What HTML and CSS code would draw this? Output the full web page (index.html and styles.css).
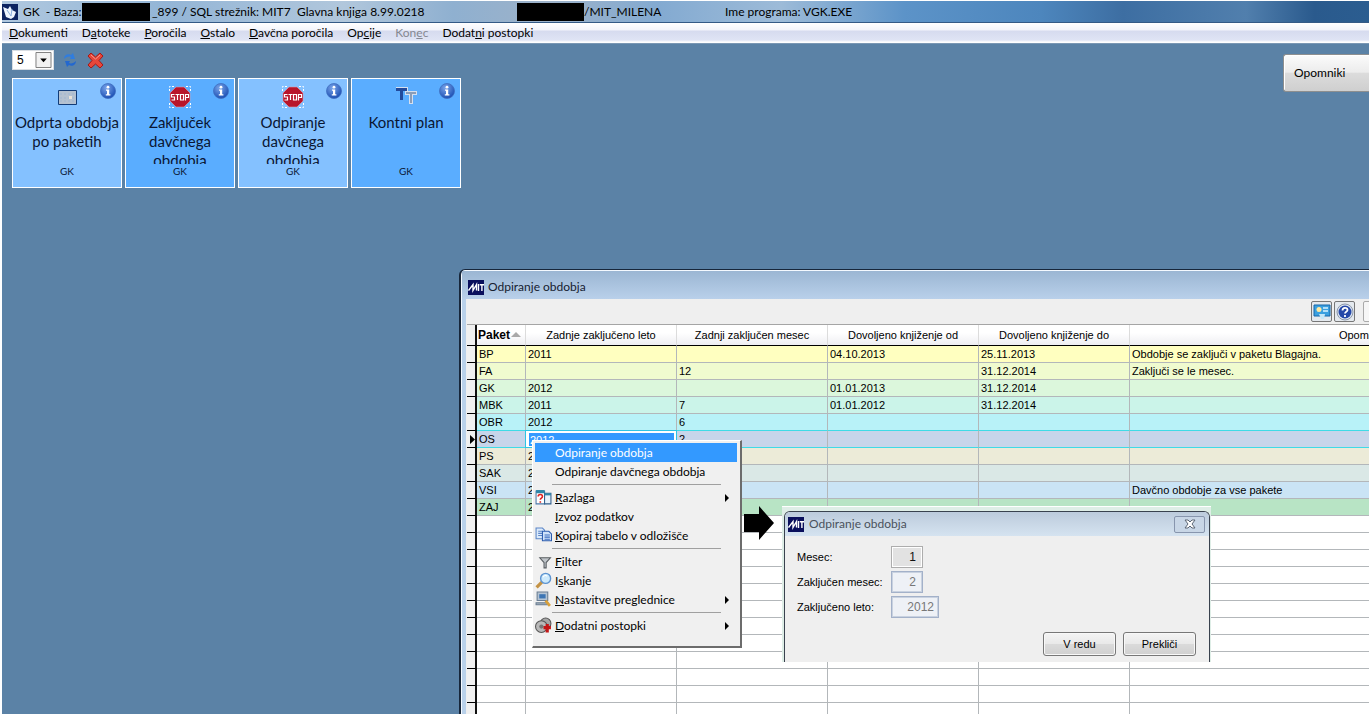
FILE: index.html
```html
<!DOCTYPE html>
<html lang="sl">
<head>
<meta charset="utf-8">
<title>GK - Glavna knjiga</title>
<link rel="stylesheet" href="styles.css">
</head>
<body>
<svg class="defs" aria-hidden="true">
  <defs>
    <radialGradient id="blueBall" cx="40%" cy="30%" r="70%"><stop offset="0" stop-color="#7aa5ea"/><stop offset="1" stop-color="#1c50b4"/></radialGradient>
    <symbol id="info" viewBox="0 0 16 16">
      <circle cx="8" cy="8" r="7.5" fill="url(#blueBall)" stroke="#3f6fc0" stroke-width=".8"/>
      <circle cx="8" cy="4.2" r="1.4" fill="#fff"/><path d="M6 6.6h3.2v4.6h1.2v1.2H5.8v-1.2H7V7.8H6z" fill="#fff"/>
    </symbol>
    <symbol id="stop" viewBox="0 0 22 22">
      <path d="M.5 5V.5H5M17 .5h4.500V5M21.500 17v4.500H17M5 21.500H.5V17" fill="none" stroke="#fff" stroke-dasharray="2 1.500"/>
      <path d="M7 1h8l6 6v8l-6 6H7l-6-6V7z" fill="#b8152b" stroke="#d8a0b0" stroke-width=".6"/>
      <path d="M5.500 8.500H2.500v2.500h3v3h-3M6.500 8.500h4M8.500 8.500V14M11.500 8.500h3V14h-3zM16.500 14.500v-6h3v3h-3" fill="none" stroke="#fff" stroke-width="1.200"/>
    </symbol>
    <symbol id="mit" viewBox="0 0 16 15">
      <path d="M0 0h16v15H0z" fill="#0a0f5c"/>
      <path d="M.5 10.500 5 4.500v6L8.500 4.500v6M10.500 4v7M11.800 4.700H16M13.900 4.700V11" fill="none" stroke="#fff" stroke-width="1.400"/>
    </symbol>
  </defs>
</svg>
<div class="app">
  <header class="titlebar">
    <svg class="app-icon" viewBox="0 0 16 16"><path d="M0 0h16v16H0z" fill="#0d2461"/><path d="m1 3 5 2 2-3 2 4 4 2-2 5-3 2-5-2z" fill="#eef5ff"/><path d="m5 6 4 6M10 5l-1 7" stroke="#8db1dd" fill="none"/></svg>
    <span class="title-text">GK &nbsp;- Baza:</span>
    <span class="redacted"></span>
    <span class="title-text after">_899 / SQL strežnik: MIT7</span>
    <span class="title-text">Glavna knjiga 8.99.0218</span>
    <span class="redacted"></span>
    <span class="title-text">/MIT_MILENA</span>
    <span class="title-text">Ime programa: VGK.EXE</span>
  </header>
  <nav class="menubar">
    <button class="menu"><u>D</u>okumenti</button>
    <button class="menu">D<u>a</u>toteke</button>
    <button class="menu"><u>P</u>oročila</button>
    <button class="menu"><u>O</u>stalo</button>
    <button class="menu"><u>D</u>avčna poročila</button>
    <button class="menu">Op<u>c</u>ije</button>
    <button class="menu" disabled>Kon<u>e</u>c</button>
    <button class="menu">Dodat<u>n</u>i postopki</button>
  </nav>
  <main class="desktop">
    <div class="desk-top">
      <div class="desk-left">
        <div class="tools">
          <span class="combo"><select aria-label="Število"><option>5</option></select><svg class="combo-arrow" viewBox="0 0 17 17"><path d="M.5.5h16v16H.5z" fill="#f2f2f2" stroke="#777"/><path d="M5 7h7l-3.500 4z" fill="#000"/></svg></span>
          <button class="tool" aria-label="Osveži"><svg width="14" height="16" viewBox="0 0 14 16"><path d="M1 7c0-4 4-6 7-4l2-2 2 6H7l1-2C6 4 3 5 1 7z" fill="#2f7de0"/><path d="M13 9c0 4-4 6-7 4l-2 2-2-6h5l-1 2c2 1 5 0 7-2z" fill="#2368cf"/></svg></button>
          <button class="tool" aria-label="Zapri"><svg width="17" height="17" viewBox="0 0 17 17"><path d="M4 1 8.500 5 13 1l3 3-4 4.500L16 13l-3 3-4.500-4L4 16l-3-3 4-4.500L1 4z" fill="#e8473a" stroke="#a81815" stroke-linejoin="round"/><path d="m4 3 4.500 4L13 3" stroke="#f79a8c" fill="none"/></svg></button>
        </div>
        <div class="tiles">
          <a class="tile" href="#"><svg class="info"><use href="#info"/></svg><svg class="tile-icon" viewBox="0 0 22 22"><path d="M2.500 4.500h18v14h-18z" fill="#b4c1d0" stroke="#123c78"/><path d="M4 8h15M4 12h15M4 15h15" stroke="#9fb6d1" stroke-dasharray="2 2"/><path d="M13 10h3v3h-3z" fill="#e8e2d8"/></svg><span class="tile-name">Odprta obdobja po paketih</span><span class="tile-group">GK</span></a>
          <a class="tile alt" href="#"><svg class="info"><use href="#info"/></svg><svg class="tile-icon"><use href="#stop"/></svg><span class="tile-name">Zaključek davčnega obdobja</span><span class="tile-group">GK</span></a>
          <a class="tile" href="#"><svg class="info"><use href="#info"/></svg><svg class="tile-icon"><use href="#stop"/></svg><span class="tile-name">Odpiranje davčnega obdobja</span><span class="tile-group">GK</span></a>
          <a class="tile alt" href="#"><svg class="info"><use href="#info"/></svg><svg class="tile-icon" viewBox="0 0 22 22"><path d="M1 1h12v4H1zM10 5h12v4H10zM14 8h4v10h-4z" fill="#d4dfef"/><path d="M1 2h11v3H8v9H5V5H1z" fill="#214a9c"/><path d="M11 6h10v2h-4v9h-2V8h-4z" fill="#8a9db8"/></svg><span class="tile-name">Kontni plan</span><span class="tile-group">GK</span></a>
        </div>
      </div>
      <button class="reminders">Opomniki</button>
    </div>

    <section class="window">
      <div class="window-title"><svg class="mit"><use href="#mit"/></svg><span>Odpiranje obdobja</span></div>
      <div class="window-body">
        <div class="window-tools">
          <button class="square" aria-label="Prikaz"><svg width="18" height="18" viewBox="0 0 18 18"><path d="M1 2h16v11H1z" fill="#3aa0e0" stroke="#1767a8"/><circle cx="6" cy="6.500" r="2.500" fill="#ffe9a0"/><path d="M10 5h5M10 8h5" stroke="#d9f3ff" stroke-width="1.500"/><path d="M6 11h6l-1 5H8z" fill="#c4e7f8"/></svg></button>
          <button class="square" aria-label="Pomoč"><svg width="18" height="18" viewBox="0 0 18 18"><circle cx="9" cy="9" r="8" fill="#dfe7f2" stroke="#8a96a8"/><circle cx="9" cy="9" r="6.500" fill="#2548a8"/><path d="M6.500 7.500c0-3.500 5-3.500 5-.5 0 1.800-2.500 1.600-2.500 3.500M9 12v2" fill="none" stroke="#fff" stroke-width="1.800"/></svg></button>
          <button class="square last" aria-label="Izhod"><svg width="18" height="18" viewBox="0 0 18 18"><path d="M4 4h12v11H4z" fill="#b8bcc2"/></svg></button>
        </div>
        <table class="grid">
          <colgroup><col class="c-mark"><col class="c-id"><col class="c-mid"><col class="c-mid"><col class="c-mid"><col class="c-mid"><col></colgroup>
          <thead><tr><th></th><th class="sorted"><span>Paket</span><svg width="10" height="5" viewBox="0 0 10 5"><path d="M0 5h10L5 0z" fill="#a9a9a9"/></svg></th><th>Zadnje zaključeno leto</th><th>Zadnji zaključen mesec</th><th>Dovoljeno knjiženje od</th><th>Dovoljeno knjiženje do</th><th>Opombe</th></tr></thead>
          <tbody>
            <tr class="r1"><td></td><td>BP</td><td>2011</td><td></td><td>04.10.2013</td><td>25.11.2013</td><td>Obdobje se zaključi v paketu Blagajna.</td></tr>
            <tr class="r2"><td></td><td>FA</td><td></td><td>12</td><td></td><td>31.12.2014</td><td>Zaključi se le mesec.</td></tr>
            <tr class="r3"><td></td><td>GK</td><td>2012</td><td></td><td>01.01.2013</td><td>31.12.2014</td><td></td></tr>
            <tr class="r4"><td></td><td>MBK</td><td>2011</td><td>7</td><td>01.01.2012</td><td>31.12.2014</td><td></td></tr>
            <tr class="r5"><td></td><td>OBR</td><td>2012</td><td>6</td><td></td><td></td><td></td></tr>
            <tr class="r6"><td class="marker"><svg width="5" height="9" viewBox="0 0 5 9"><path d="M0 0v9l5-4.500z"/></svg></td><td>OS</td><td class="editing"><input value="2012" aria-label="Zadnje zaključeno leto"></td><td>2</td><td></td><td></td><td></td></tr>
            <tr class="r7"><td></td><td>PS</td><td>2012</td><td></td><td></td><td></td><td></td></tr>
            <tr class="r8"><td></td><td>SAK</td><td>2012</td><td></td><td></td><td></td><td></td></tr>
            <tr class="r9"><td></td><td>VSI</td><td>2012</td><td></td><td></td><td></td><td>Davčno obdobje za vse pakete</td></tr>
            <tr class="r10"><td></td><td>ZAJ</td><td>2012</td><td></td><td></td><td></td><td></td></tr>
            <tr><td></td><td></td><td></td><td></td><td></td><td></td><td></td></tr>
            <tr><td></td><td></td><td></td><td></td><td></td><td></td><td></td></tr>
            <tr><td></td><td></td><td></td><td></td><td></td><td></td><td></td></tr>
            <tr><td></td><td></td><td></td><td></td><td></td><td></td><td></td></tr>
            <tr><td></td><td></td><td></td><td></td><td></td><td></td><td></td></tr>
            <tr><td></td><td></td><td></td><td></td><td></td><td></td><td></td></tr>
            <tr><td></td><td></td><td></td><td></td><td></td><td></td><td></td></tr>
            <tr><td></td><td></td><td></td><td></td><td></td><td></td><td></td></tr>
            <tr><td></td><td></td><td></td><td></td><td></td><td></td><td></td></tr>
            <tr><td></td><td></td><td></td><td></td><td></td><td></td><td></td></tr>
            <tr><td></td><td></td><td></td><td></td><td></td><td></td><td></td></tr>
            <tr><td></td><td></td><td></td><td></td><td></td><td></td><td></td></tr>
          </tbody>
        </table>
      </div>
    </section>

    <div class="context">
      <button class="item active"><span></span><span>Odpiranje obdobja</span></button>
      <button class="item"><span></span><span>Odpiranje davčnega obdobja</span></button>
      <hr>
      <button class="item"><svg viewBox="0 0 16 16"><path d="M1 2h8v12H1z" fill="#fff" stroke="#4a78a8"/><path d="M1 1h8v3H1z" fill="#2e86a8"/><path d="M9 4h6v10H9z" fill="#e8f2fa" stroke="#315f8c"/><path d="M9 4h6v2H9z" fill="#2e86a8"/><path d="M3 7c0-2.500 4-2.500 4 0 0 1.500-2 1.500-2 3M5 11.500v1.500" fill="none" stroke="#d22" stroke-width="1.500"/></svg><span><u>R</u>azlaga</span><i></i></button>
      <button class="item"><span></span><span><u>I</u>zvoz podatkov</span></button>
      <button class="item"><svg viewBox="0 0 16 16"><path d="M1 1h6l2 2v8H1z" fill="#dcebfb" stroke="#5c86c8"/><path d="M3 4h4M3 6h4M3 8h4" stroke="#5c86c8"/><path d="M7 4h6l2.500 2.500V13H7z" fill="#cfe2fa" stroke="#2c5cae"/><path d="M9 7.500h5M9 9.500h5M9 11.500h5" stroke="#3c6cbe"/></svg><span><u>K</u>opiraj tabelo v odložišče</span></button>
      <hr>
      <button class="item"><svg viewBox="0 0 16 16"><path d="M4.500 4.500h10l-4 4.500v5H8.500V9z" fill="#bfc4c9" stroke="#585d62"/></svg><span><u>F</u>ilter</span></button>
      <button class="item"><svg viewBox="0 0 16 16"><path d="m1.500 14.500 5-5" stroke="#c49345" stroke-width="3"/><circle cx="10" cy="6" r="4.700" fill="#cdeafc" stroke="#5c93d0" stroke-width="1.300"/><path d="M7.500 5c1-2 3-2 4-1" fill="none" stroke="#fff"/></svg><span>I<u>s</u>kanje</span></button>
      <button class="item"><svg viewBox="0 0 16 16"><path d="M2 1h10v8H2z" fill="#b5c4d4" stroke="#6a7d92"/><path d="M4 3h6v4H4z" fill="#3d75b4"/><path d="M1 11h11l1 2H1z" fill="#a4afba" stroke="#6a7d92"/><path d="m10 9 4 5" stroke="#d8a03a" stroke-width="2.500"/></svg><span><u>N</u>astavitve preglednice</span><i></i></button>
      <hr>
      <button class="item"><svg viewBox="0 0 16 16"><circle cx="10" cy="6" r="5" fill="#a6a6a6" stroke="#555"/><circle cx="6" cy="9" r="5.500" fill="#b9b9b9" stroke="#555"/><circle cx="6" cy="9" r="2" fill="#777"/><path d="M8 10h7M11.500 6.500v8" stroke="#c31616" stroke-width="3"/></svg><span><u>D</u>odatni postopki</span><i></i></button>
    </div>

    <svg class="pointer" viewBox="0 0 30 34"><path d="M0 8h15V0l15 17-15 17v-8H0z"/></svg>

    <form class="dialog-shot">
      <div class="dialog">
        <div class="dialog-title"><svg class="mit"><use href="#mit"/></svg><span>Odpiranje obdobja</span><button type="button" class="close" aria-label="Zapri"><svg width="12" height="10" viewBox="0 0 12 10"><path d="M1 1h3l2 2 2-2h3L8 5l3 4H8L6 7 4 9H1l3-4z" fill="#fff" stroke="#5c6674"/></svg></button></div>
        <div class="fields">
          <label for="m">Mesec:</label><input id="m" class="field gray" value="1">
          <label for="zm">Zaključen mesec:</label><input id="zm" class="field" value="2" disabled>
          <label for="zl">Zaključeno leto:</label><input id="zl" class="field wide" value="2012" disabled>
        </div>
        <div class="actions"><button type="button">V redu</button><button type="button">Prekliči</button></div>
      </div>
    </form>
  </main>
</div>
</body>
</html>
```
FILE: styles.css
```css
:root {
  --ui: Lato, "Open Sans", sans-serif;
  --small: "Liberation Sans", Arial, sans-serif;
}
* { box-sizing: border-box; }
body { margin: 0; background: #fff; font: 12px/16px var(--ui); color: #000; }
button, input, select { font: inherit; color: inherit; margin: 0; padding: 0; }
svg { display: block; flex: none; }
.defs { position: absolute; width: 0; height: 0; }
.app { height: 100vh; display: flex; flex-direction: column; padding: 1px 1px 1px 2px; overflow: hidden; }

.titlebar {
  flex: none; height: 22px;
  display: grid; align-items: center;
  grid-template-columns: 21px 59px 68px 147px 220px 67px 141px 1fr;
  background: linear-gradient(90deg, #b0c8df 0, #93b5d6 12%, #b1c7dc 25%, #8fb0d0 33%, #9db2c9 40%, #83aad1 48%, #9dbbd8 57%, #5c93c8 66%, #4d86bd 76%, #3d6ea2 82%, #517fad 91%, #2a5a8d 96%, #2b5d90 100%);
  border-bottom: 1px solid #345a86;
}
.app-icon { width: 16px; height: 16px; }
.title-text { white-space: pre; }
.title-text.after { padding-left: 2px; }
.redacted { background: #000; height: 18px; }
.menubar {
  flex: none; height: 20px; display: flex; gap: 14px; align-items: center; padding-left: 7px;
  background: linear-gradient(#fff 0, #f3f4fb 35%, #d6dbef 40%, #dfe4f4 85%, #fff 95%);
}
.menu { border: 0; background: none; white-space: nowrap; }
.menu:disabled { color: #858891; }

.desktop { position: relative; flex: 1; overflow: hidden; background: #5b82a6; border-top: 1px solid #7b98b4; }
.desk-top { display: flex; justify-content: space-between; align-items: flex-start; }
.desk-left { padding: 6px 0 0 10px; }
.tools { display: flex; align-items: center; gap: 7px; height: 20px; }
.combo { position: relative; width: 42px; height: 20px; }
.combo select { width: 100%; height: 100%; appearance: none; border: 1px solid #d8dde2; border-radius: 0; background: #fff; padding-left: 4px; font-family: var(--small); }
.combo-arrow { position: absolute; right: 2px; top: 2px; width: 17px; height: 16px; pointer-events: none; }
.tool { border: 0; background: none; width: 18px; display: grid; place-items: center; }
.tiles { display: flex; gap: 3px; padding-top: 8px; }
.tile {
  position: relative; width: 110px; height: 110px; border: 1px solid #fff; background: #84c1ff;
  display: flex; flex-direction: column; align-items: center; padding-top: 7px;
  color: #0a1633; text-decoration: none; text-align: center;
}
.tile.alt { background: #5aadff; }
.info { position: absolute; right: 5px; top: 4px; width: 16px; height: 16px; }
.tile-icon { width: 22px; height: 22px; }
.tile-name { font: 15px/19px Lato, sans-serif; height: 51px; margin-top: 5px; overflow: hidden; }
.tile-group { font: 10px/14px Lato, sans-serif; }
.reminders {
  margin-top: 10px; width: 86px; height: 38px; padding-left: 10px; text-align: left;
  border: 1px solid #8e8f8f; border-right: 0; border-radius: 3px 0 0 3px;
  background: linear-gradient(#fbfbfb, #ececec 48%, #dcdcdc 50%, #cfcfcf);
  box-shadow: inset 1px 1px #fff;
}

.window {
  position: absolute; left: 457px; right: -222px; top: 225px; bottom: 0;
  display: flex; flex-direction: column; padding-left: 5px; overflow: hidden;
  border: solid #17263a; border-width: 1px 0 0 2px; border-radius: 6px 0 0 0;
  background: #b9d1ea; box-shadow: inset 1px 1px #f4f9ff;
}
.window-title {
  flex: none; height: 28px; display: flex; align-items: center; gap: 4px;
  margin: 1px 0 0 -4px; padding: 4px 0 0 6px; color: #152030;
  background: linear-gradient(#9bb6d3, #b9d0ea);
}
.mit { width: 16px; height: 15px; }
.window-body { flex: 1; background: #efefef; padding-left: 1px; }
.window-tools { height: 25px; display: flex; gap: 2px; padding-right: 207px; justify-content: flex-end; align-items: center; }
.square { width: 21px; height: 21px; border: 1px solid #777; border-radius: 2px; background: #e4e9ee; display: grid; place-items: center; }
.square.last { margin-left: 6px; background: #f6f6f6; border-color: #aaa; }

.grid { width: 100%; table-layout: fixed; border-collapse: separate; border-spacing: 0; background: #fff; border-top: 1px solid #a5a5a5; font: 11px/16px var(--small); }
.c-mark { width: 10px; }
.c-id { width: 49px; }
.c-mid { width: 151px; }
.grid th { height: 21px; padding: 0 0 1px; font-weight: 400; background: linear-gradient(#fff 40%, #eeeef2); border-right: 1px solid #dcdcdc; border-bottom: 1px solid #000; white-space: nowrap; }
.grid th.sorted { display: flex; align-items: center; gap: 1px; padding-left: 1px; font-weight: 700; font-size: 12px; }
.grid td { height: 17px; padding: 0 0 0 2px; border-right: 1px solid #b3b7ba; border-bottom: 1px solid #b3b7ba; white-space: nowrap; }
.grid th:first-child, .grid td:first-child { background: #f0f0f0; border-right: 2px solid #111; border-bottom-color: #000; padding: 0; }
.r1 { background: #ffffc0; }
.r2 { background: #f0fbcf; }
.r3 { background: #dcf7dc; }
.r4 { background: #cbf4e9; }
.r5 { background: #b8f2f8; }
.r6 { background: #c7d5ea; }
.r7 { background: #ecebd8; }
.r8 { background: #dae8e6; }
.r9 { background: #cae4f5; }
.r10 { background: #b8e4c5; }
.grid .r5 td:not(:first-child), .grid .r6 td:not(:first-child) { border-bottom-color: #3fdbe6; }
.grid .marker svg { margin-left: 3px; }
.grid td.editing { padding: 0; }
.editing input { display: block; width: 100%; height: 16px; border: solid #fff; border-width: 2px 2px 1px 3px; outline: 1px solid #2fc4e4; background: #3399ff; color: #fff; padding-left: 1px; border-radius: 0; }

.context {
  position: absolute; left: 530px; top: 396px; width: 210px; padding: 2px 3px 11px 2px;
  background: #f0f0f0; border: solid #fff; border-width: 1px 2px 2px 1px;
  border-right-color: #6c6c6c; border-bottom-color: #6c6c6c;
}
.item { width: 100%; height: 19px; border: 0; background: none; display: grid; grid-template-columns: 17px 1fr 12px; column-gap: 3px; align-items: center; text-align: left; white-space: nowrap; }
.item.active { background: #3399ff; color: #fff; }
.item svg { width: 17px; height: 17px; }
.item i { width: 0; height: 0; border: 4px solid transparent; border-left-color: #000; border-right: 0; }
.context hr { margin: 3px 16px 3px 17px; border: 0; border-top: 1px solid #a0a0a0; }

.pointer { position: absolute; left: 742px; top: 462px; width: 30px; height: 34px; }

.dialog-shot { position: absolute; left: 780px; top: 462px; width: 429px; padding: 4px 1px 0 2px; background: #dfeee7; border-top: 1px solid #fff; }
.dialog { border: solid #39424e; border-width: 1px 1px 0; border-radius: 6px 6px 0 0; background: #efefef; font: 11px/16px var(--small); overflow: hidden; padding-bottom: 6px; }
.dialog-title { height: 24px; display: flex; align-items: center; gap: 5px; padding: 0 4px 0 3px; background: linear-gradient(#bccbdc, #d5e3f0); font: 12px/16px var(--ui); color: #4a525c; }
.close { margin-left: auto; width: 31px; height: 17px; border: 1px solid #8795ad; border-radius: 2px; background: #c8d6e6; display: grid; place-items: center; }
.fields { display: grid; grid-template-columns: 94px 1fr; row-gap: 3px; align-items: center; padding: 10px 0 0 12px; }
.field { width: 32px; height: 22px; border: 1px solid #a3b1c9; outline: 1px solid #c9d2e0; outline-offset: -2px; background: #eef1f6; color: #777; text-align: right; padding-right: 6px; font-size: 12px; }
.field.gray { background: #e2e2e2; border-color: #adadad; outline-color: #fff; color: #111; }
.field.wide { width: 48px; padding-right: 4px; }
.actions { display: flex; justify-content: flex-end; gap: 7px; padding: 14px 13px 0 0; }
.actions button { width: 73px; height: 24px; border: 1px solid #777; border-radius: 3px; background: linear-gradient(#f4f4f4, #e9e9e9 48%, #dadada 52%, #d0d0d0); box-shadow: inset 0 0 0 1px #f8f8f8; }
```
